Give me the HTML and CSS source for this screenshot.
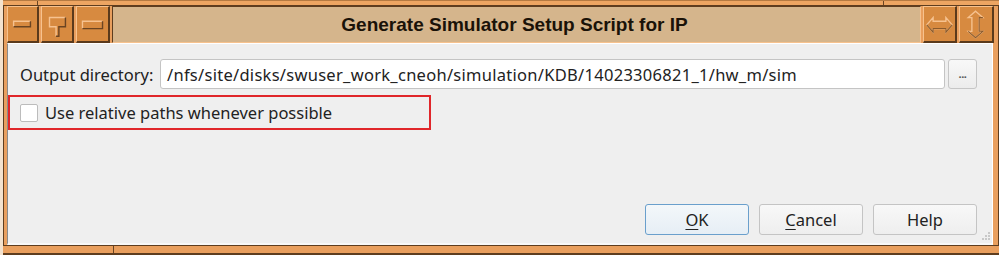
FILE: index.html
```html
<!DOCTYPE html>
<html>
<head>
<meta charset="utf-8">
<link rel="stylesheet" href="styles.css">
</head>
<body>
<div class="window">
  <div class="top-strip"><span class="notch n1"></span><span class="notch n2"></span></div>
  <div class="titlebar">
    <div class="tbtn b1">
      <svg width="31" height="36" viewBox="0 0 31 36"><path d="M6 21 V15 H24" fill="none" stroke="#f6c290" stroke-width="1.5"/><path d="M6 21 H24 V15" fill="none" stroke="#6a4422" stroke-width="1.5"/></svg>
    </div>
    <div class="tbtn b2">
      <svg width="32" height="36" viewBox="0 0 32 36"><path d="M15 31 V21 H8 V11 H25" fill="none" stroke="#f6c290" stroke-width="1.5"/><path d="M25 11 V21 H18 V31 H15" fill="none" stroke="#6a4422" stroke-width="1.5"/></svg>
    </div>
    <div class="tbtn b3">
      <svg width="34" height="36" viewBox="0 0 34 36"><path d="M6 23 V15 H28" fill="none" stroke="#f6c290" stroke-width="1.5"/><path d="M6 23 H28 V15" fill="none" stroke="#6a4422" stroke-width="1.5"/></svg>
    </div>
    <div class="title">Generate Simulator Setup Script for IP</div>
    <div class="tbtn b4">
      <svg width="34" height="36" viewBox="0 0 34 36"><path d="M3 19 L10 11 V15 H24 V11 L31 19 L24 27 V23 H10 V27 Z" fill="none" stroke="#f6c290" stroke-width="1.5"/><path d="M31 19 L24 27 V23 H10 V27 L3 19" fill="none" stroke="#8a5a2c" stroke-width="1.2"/></svg>
    </div>
    <div class="tbtn b5">
      <svg width="35" height="36" viewBox="0 0 35 36"><path d="M17 4 L25 11 H21 V26 H25 L17 33 L9 26 H13 V11 H9 Z" fill="none" stroke="#f6c290" stroke-width="1.5"/><path d="M25 11 H21 V26 H25 L17 33 L9 26" fill="none" stroke="#8a5a2c" stroke-width="1.2"/></svg>
    </div>
  </div>
  <div class="body-row">
    <div class="client">
      <div class="row">
        <label class="label">Output directory:</label>
        <div class="input">/nfs/site/disks/swuser_work_cneoh/simulation/KDB/14023306821_1/hw_m/sim</div>
        <div class="browse">...</div>
      </div>
      <div class="check-row">
        <span class="checkbox"></span>
        <span class="check-label">Use relative paths whenever possible</span>
      </div>
      <div class="spacer"></div>
      <div class="buttons">
        <div class="btn ok"><span class="u">O</span>K</div>
        <div class="btn"><span class="u">C</span>ancel</div>
        <div class="btn">Help</div>
      </div>
      <div class="grip">
        <svg width="12" height="10" viewBox="0 0 12 10"><g fill="#c8c8c8"><rect x="9" y="0" width="2" height="2"/><rect x="6" y="3" width="2" height="2"/><rect x="9" y="3" width="2" height="2"/><rect x="3" y="6" width="2" height="2"/><rect x="6" y="6" width="2" height="2"/><rect x="9" y="6" width="2" height="2"/></g></svg>
      </div>
    </div>
  </div>
  <div class="bottom-strip"><span class="notch n3"></span><span class="notch n4"></span></div>
</div>
</body>
</html>
```
FILE: styles.css
```css
* { box-sizing: border-box; }
html, body { margin: 0; padding: 0; background: #ffffff; }
body { width: 999px; height: 255px; overflow: hidden; font-family: "Noto Sans", "Open Sans", sans-serif; }

.window {
  width: 999px;
  height: 255px;
  display: flex;
  flex-direction: column;
  background: #e99f5e;
  border-left: 3px solid #f3e2cf;
}

.top-strip {
  height: 6px;
  background: #eda562;
  border-top: 1px solid #b57a42;
  border-bottom: 1px solid #5e3d1f;
  position: relative;
}
.notch { position: absolute; top: 0; width: 1px; height: 100%; background: #6a4422; }
.n1 { left: 34px; }
.n2 { left: 880px; }
.n3 { left: 110px; }
.n4 { left: 1000px; }

.titlebar {
  height: 37px;
  display: flex;
  padding: 0 4px 0 3px;
  border-left: 1px solid #5e3d1f;
  border-right: 1px solid #5e3d1f;
  gap: 2px;
  background: #e99f5e;
}
.tbtn {
  background: #d78a40;
  border-top: 1px solid #f7c28e;
  border-left: 1px solid #f7c28e;
  border-right: 2px solid #5a3a1c;
  border-bottom: 2px solid #5a3a1c;
  display: flex;
  align-items: center;
  justify-content: center;
}
.tbtn svg { display: block; }
.b1 { width: 32px; }
.b2 { width: 33px; }
.b3 { width: 34px; }
.b4 { width: 34px; }
.b5 { width: 35px; }
.title {
  flex: 1;
  background: #d5b58c;
  border-top: 1px solid #5e3d1f;
  border-left: 1px solid #5e3d1f;
  border-right: 1px solid #f7c28e;
  border-bottom: 1px solid #f7c28e;
  font-family: "Liberation Sans", Arial, sans-serif;
  font-weight: bold;
  font-size: 19px;
  color: #1a1208;
  display: flex;
  align-items: center;
  justify-content: center;
  padding-right: 4px;
}

.body-row {
  flex: 1;
  display: flex;
  padding: 0 5px 0 3px;
  border-left: 1px solid #5e3d1f;
  border-right: 1px solid #5e3d1f;
}
.client {
  flex: 1;
  background: #efefef;
  border-left: 1px solid #8a8a8a;
  border-top: 1px solid #ffffff;
  border-right: 1px solid #ffffff;
  border-bottom: 2px solid #f8f8f8;
  display: flex;
  flex-direction: column;
  padding: 15px 15px 8px 0;
  position: relative;
  color: #222222;
  font-size: 16.5px;
}

.row {
  display: flex;
  align-items: center;
  height: 30px;
  padding-left: 12px;
}
.label { width: 140px; flex: none; white-space: nowrap; }
.input {
  flex: 1;
  height: 30px;
  background: #ffffff;
  border: 1px solid #c4c4c4;
  border-radius: 3px;
  padding-left: 6px;
  display: flex;
  align-items: center;
  white-space: nowrap;
  overflow: hidden;
  letter-spacing: 0.28px;
}
.browse {
  width: 29px;
  height: 30px;
  margin-left: 3px;
  flex: none;
  background: linear-gradient(#f8f8f8, #ececec);
  border: 1px solid #c6c6c6;
  border-radius: 3px;
  display: flex;
  align-items: center;
  justify-content: center;
  font-size: 11px;
  font-weight: bold;
  color: #555555;
  letter-spacing: -0.5px;
  padding-bottom: 2px;
}

.check-row {
  margin-top: 6px;
  width: 423px;
  height: 35px;
  border: 2px solid #e0262a;
  display: flex;
  align-items: center;
  padding-left: 10px;
}
.checkbox {
  width: 18px;
  height: 18px;
  background: #ffffff;
  border: 1px solid #bcbcbc;
  border-radius: 2px;
  margin-right: 7px;
  flex: none;
}

.spacer { flex: 1; }

.buttons {
  display: flex;
  justify-content: flex-end;
  gap: 10px;
}
.btn {
  width: 104px;
  height: 31px;
  background: linear-gradient(#f8f8f8, #eeeeee);
  border: 1px solid #c4c4c4;
  border-radius: 3px;
  display: flex;
  align-items: center;
  justify-content: center;
  font-size: 16.5px;
  color: #222222;
}
.btn.ok {
  background: linear-gradient(#f3f7fa, #e6eef5);
  border-color: #6a9fcc;
}
.u { text-decoration: underline; text-underline-offset: 3px; }

.grip {
  position: absolute;
  right: 1px;
  bottom: 1px;
  line-height: 0;
}

.bottom-strip {
  height: 10px;
  background: #e99f5e;
  border-top: 1px solid #5e3d1f;
  border-bottom: 2px solid #5e3d1f;
  position: relative;
}
```
